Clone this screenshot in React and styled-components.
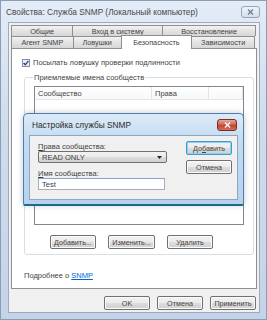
import React from "react";
import styled, { createGlobalStyle } from "styled-components";

const Global = createGlobalStyle`
  body {
    margin: 0;
    font-family: "Liberation Sans", "DejaVu Sans", sans-serif;
    font-size: 7.5px;
    color: #3f3f3f;
  }
`;

const Window = styled.div`
  position: relative;
  width: 267px;
  height: 320px;
  box-sizing: border-box;
  padding: 0 6px 6px 7px;
  background: linear-gradient(180deg, #e3ecf7 0%, #cfdcec 40%, #c4d4e8 100%);
  border: 1px solid #8b9db5;
  display: flex;
  flex-direction: column;
`;

const TitleBar = styled.div`
  height: 21px;
  display: flex;
  align-items: center;
  justify-content: space-between;
`;

const Title = styled.span`
  font-size: 8.3px;
  color: #474747;
  margin-left: -2px;
`;

const CloseBox = styled.div`
  width: 19px;
  height: 12px;
  box-sizing: border-box;
  border: 1px solid #95a6bb;
  border-radius: 3px;
  background: linear-gradient(#eef3f9, #d4deeb);
  display: flex;
  align-items: center;
  justify-content: center;
`;

const Client = styled.div`
  flex: 1;
  background: #f0f0f0;
  border: 1px solid #9aabc2;
  display: flex;
  flex-direction: column;
  padding: 2px 1px 0 1px;
`;

const TabRow = styled.div`
  display: flex;
  height: ${(p) => p.$h}px;
  padding-left: 2px;
  padding-right: ${(p) => p.$pr}px;
`;

const Tab = styled.div`
  width: ${(p) => p.$w}px;
  box-sizing: border-box;
  border: 1px solid #8e8f8f;
  border-bottom: none;
  margin-left: -1px;
  display: flex;
  align-items: center;
  justify-content: center;
  color: #444;
  background: ${(p) =>
    p.$active ? "#ffffff" : "linear-gradient(#f2f2f2, #e3e3e3 50%, #d6d6d6)"};
  position: relative;
  z-index: ${(p) => (p.$active ? 2 : 1)};
  height: ${(p) => (p.$active ? "calc(100% + 2px)" : "100%")};
  margin-top: ${(p) => (p.$active ? "-1px" : "0")};
  font-size: 7.3px;
`;

const Panel = styled.div`
  height: 241px;
  margin: 0 1px;
  background: #fff;
  border: 1px solid #8e8f8f;
  box-sizing: border-box;
  display: flex;
  flex-direction: column;
  padding: 9px 0 0 10px;
`;

const CheckRow = styled.div`
  display: flex;
  align-items: center;
  gap: 3px;
  height: 9px;
`;

const Check = styled.div`
  width: 8px;
  height: 8px;
  box-sizing: border-box;
  border: 1px solid #8f8f8f;
  background: linear-gradient(#eef5fc, #dfe9f5);
  display: flex;
  align-items: center;
  justify-content: center;
`;

const Group = styled.fieldset`
  margin: 6px 0 0 2px;
  width: 230px;
  height: 182px;
  box-sizing: border-box;
  border: 1px solid #d5dfe5;
  border-radius: 3px;
  padding: 4px 0 0 9px;
  display: flex;
  flex-direction: column;
`;

const Legend = styled.legend`
  padding: 0 1px;
  margin-left: -1px;
`;

const ListBox = styled.div`
  width: 210px;
  height: 139px;
  box-sizing: border-box;
  border: 1px solid #828790;
  background: #fff;
`;

const ListHeader = styled.div`
  display: grid;
  grid-template-columns: 117px 57px 1fr;
  height: 12px;
  border-bottom: 1px solid #e5e5e5;
  background: linear-gradient(#ffffff, #f7f8f9);
`;

const HeadCell = styled.div`
  display: flex;
  align-items: center;
  padding-left: 3px;
  border-right: 1px solid #e5e5e5;
`;

const ButtonRow = styled.div`
  display: flex;
  gap: ${(p) => p.$gap}px;
  margin: ${(p) => p.$m};
`;

const Btn = styled.div`
  width: ${(p) => p.$w}px;
  height: 14px;
  box-sizing: border-box;
  border: 1px solid ${(p) => (p.$focus ? "#3c9dd2" : "#707070")};
  box-shadow: ${(p) =>
    p.$focus ? "inset 0 0 0 1px #8fd0f0" : "inset 0 0 0 1px #fbfbfb"};
  border-radius: 2px;
  background: linear-gradient(#f2f2f2 0%, #ebebeb 50%, #dddddd 51%, #cfcfcf 100%);
  display: flex;
  align-items: center;
  justify-content: center;
  color: #444;
  font-size: 7.2px;
`;

const LinkLine = styled.div`
  margin: 16px 0 0 2px;
`;

const Link = styled.span`
  color: #0066cc;
  text-decoration: underline;
`;

const Footer = styled.div`
  display: flex;
  justify-content: flex-end;
  gap: 7px;
  padding: 7px 2px 0 0;
`;

/* modal sitting over the property sheet */
const Dialog = styled.div`
  position: absolute;
  left: 22px;
  top: 112px;
  width: 221px;
  height: 92px;
  box-sizing: border-box;
  border: 1px solid #4d7fae;
  border-bottom-color: #1d6b8a;
  border-radius: 5px 5px 2px 2px;
  background: linear-gradient(180deg, #dceaf8 0%, #c4dbf1 30%, #b6d2ee 100%);
  padding: 0 5px 4px 5px;
  display: flex;
  flex-direction: column;
  box-shadow: 0 1px 0 #1b6b88, 0 0 6px rgba(0, 40, 80, 0.25);
`;

const DialogTitle = styled.div`
  height: 21px;
  display: flex;
  align-items: center;
  justify-content: space-between;
  padding-left: 3px;
  font-size: 8.3px;
  color: #2a2a2a;
`;

const RedClose = styled.div`
  width: 20px;
  height: 12px;
  box-sizing: border-box;
  border: 1px solid #7a2d22;
  border-radius: 3px;
  background: linear-gradient(#e5a89b, #cf5b45 50%, #c0422d 51%, #d0715c);
  display: flex;
  align-items: center;
  justify-content: center;
  margin: 1px 1px 0 0;
`;

const DialogBody = styled.div`
  flex: 1;
  background: #f0f0f0;
  border: 1px solid #8ca6c4;
  display: flex;
  justify-content: space-between;
  padding: 4px 5px 0 8px;
`;

const Fields = styled.div`
  display: flex;
  flex-direction: column;
  width: 130px;
`;

const FieldLabel = styled.div`
  margin-top: ${(p) => p.$mt}px;
  height: 9px;
`;

const Select = styled.div`
  width: 129px;
  height: 12px;
  box-sizing: border-box;
  border: 1px solid #707070;
  border-radius: 2px;
  background: linear-gradient(#f2f2f2, #ebebeb 50%, #dddddd 51%, #d1d1d1);
  display: flex;
  align-items: center;
  justify-content: space-between;
  padding: 0 4px 0 3px;
`;

const Input = styled.div`
  width: 127px;
  height: 12px;
  box-sizing: border-box;
  border: 1px solid #abadb3;
  border-top-color: #7ea6cf;
  background: #fff;
  display: flex;
  align-items: center;
  padding-left: 3px;
`;

const SideButtons = styled.div`
  display: flex;
  flex-direction: column;
  gap: 5px;
  padding-top: 1px;
`;

const U = styled.span`
  text-decoration: underline;
`;

export default function App() {
  return (
    <>
      <Global />
      <Window>
        <TitleBar>
          <Title>Свойства: Служба SNMP (Локальный компьютер)</Title>
          <CloseBox>
            <svg width="7" height="6" viewBox="0 0 7 6">
              <path d="M1 0.5 L6 5.5 M6 0.5 L1 5.5" stroke="#6a7b90" strokeWidth="1.2" />
            </svg>
          </CloseBox>
        </TitleBar>
        <Client>
          <TabRow $h={11} $pr={2}>
            <Tab $w={63}>Общие</Tab>
            <Tab $w={92}>Вход в систему</Tab>
            <Tab $w={95}>Восстановление</Tab>
          </TabRow>
          <TabRow $h={12} $pr={3}>
            <Tab $w={63}>Агент SNMP</Tab>
            <Tab $w={49}>Ловушки</Tab>
            <Tab $w={72} $active>Безопасность</Tab>
            <Tab $w={64}>Зависимости</Tab>
          </TabRow>
          <Panel>
            <CheckRow>
              <Check>
                <svg width="6" height="6" viewBox="0 0 6 6">
                  <path d="M0.6 3 L2.3 4.8 L5.4 0.8" stroke="#2a3f8f" strokeWidth="1.3" fill="none" />
                </svg>
              </Check>
              <span>Посылать ловушку проверки подлинности</span>
            </CheckRow>
            <Group>
              <Legend>Приемлемые имена сообществ</Legend>
              <ListBox>
                <ListHeader>
                  <HeadCell>Сообщество</HeadCell>
                  <HeadCell>Права</HeadCell>
                  <HeadCell />
                </ListHeader>
              </ListBox>
              <ButtonRow $gap={12} $m="10px 0 0 16px">
                <Btn $w={46}>Добавить...</Btn>
                <Btn $w={47}>Изменить...</Btn>
                <Btn $w={46}>Удалить</Btn>
              </ButtonRow>
            </Group>
            <LinkLine>
              Подробнее о <Link>SNMP</Link>
            </LinkLine>
          </Panel>
          <Footer>
            <Btn $w={46}>OK</Btn>
            <Btn $w={46}>Отмена</Btn>
            <Btn $w={46}>Применить</Btn>
          </Footer>
        </Client>

        <Dialog>
          <DialogTitle>
            <span>Настройка службы SNMP</span>
            <RedClose>
              <svg width="7" height="6" viewBox="0 0 7 6">
                <path d="M1 0.5 L6 5.5 M6 0.5 L1 5.5" stroke="#fff" strokeWidth="1.4" />
              </svg>
            </RedClose>
          </DialogTitle>
          <DialogBody>
            <Fields>
              <FieldLabel $mt={2}>
                <U>П</U>рава сообщества:
              </FieldLabel>
              <Select>
                <span>READ ONLY</span>
                <svg width="5" height="3" viewBox="0 0 5 3">
                  <path d="M0 0 H5 L2.5 3 Z" fill="#222" />
                </svg>
              </Select>
              <FieldLabel $mt={6}>
                <U>И</U>мя сообщества:
              </FieldLabel>
              <Input>Test</Input>
            </Fields>
            <SideButtons>
              <Btn $w={46} $focus>
                До<U>б</U>авить
              </Btn>
              <Btn $w={46}>Отмена</Btn>
            </SideButtons>
          </DialogBody>
        </Dialog>
      </Window>
    </>
  );
}
